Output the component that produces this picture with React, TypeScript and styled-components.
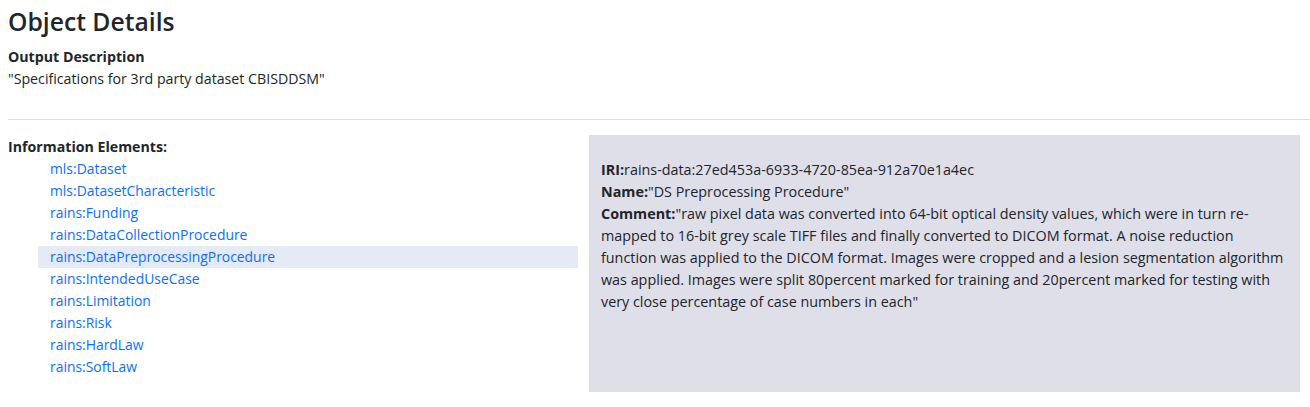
import React from 'react';
import styled, {createGlobalStyle} from 'styled-components';

const GlobalStyle = createGlobalStyle`
    body {
        margin: 0;
        background: #ffffff;
        color: #212529;
        font-family: "Open Sans", "Noto Sans", sans-serif;
        font-size: 14.2px;
        line-height: 22px;
    }
`;

const Page = styled.div`
    padding: 5px 0 0 8px;
`;

const Title = styled.h1`
    margin: 0;
    font-size: 24.7px;
    font-weight: 600;
    line-height: 34px;
    color: #212529;
`;

const Label = styled.div`
    margin-top: 7px;
    font-weight: 700;
`;

const Description = styled.div``;

const Divider = styled.hr`
    margin: 29px 0 15px 0;
    border: 0;
    border-top: 1px solid #dedede;
`;

const Columns = styled.div`
    display: grid;
    grid-template-columns: 570px 711px;
    column-gap: 11px;
    align-items: start;
`;

const ElementsTitle = styled.div`
    font-weight: 700;
    padding-top: 1px;
`;

const ElementList = styled.ul`
    list-style: none;
    margin: 0;
    padding: 0 0 0 30px;
`;

const ElementItem = styled.li<{ $active?: boolean }>`
    padding-left: 12px;
    height: 22px;
    background: ${p => p.$active ? '#e5ebf6' : 'transparent'};
`;

const ElementLink = styled.a`
    color: #0d6efd;
    font-size: 13.9px;
    text-decoration: none;
`;

const DetailPanel = styled.div`
    background: #dfdfea;
    height: 257px;
    box-sizing: border-box;
    padding: 24px 10px 0 12px;
    font-size: 14.35px;
    color: #212529;
`;

const Field = styled.div``;

const FieldName = styled.b`
    font-weight: 700;
`;

const elements = [
    'mls:Dataset',
    'mls:DatasetCharacteristic',
    'rains:Funding',
    'rains:DataCollectionProcedure',
    'rains:DataPreprocessingProcedure',
    'rains:IntendedUseCase',
    'rains:Limitation',
    'rains:Risk',
    'rains:HardLaw',
    'rains:SoftLaw',
];

const App: React.FC = () => {
    return (
        <Page>
            <GlobalStyle/>
            <Title>Object Details</Title>
            <Label>Output Description</Label>
            <Description>"Specifications for 3rd party dataset CBISDDSM"</Description>
            <Divider/>
            <Columns>
                <div>
                    <ElementsTitle>Information Elements:</ElementsTitle>
                    <ElementList>
                        {elements.map(el => (
                            <ElementItem key={el} $active={el === 'rains:DataPreprocessingProcedure'}>
                                <ElementLink href="#">{el}</ElementLink>
                            </ElementItem>
                        ))}
                    </ElementList>
                </div>
                <DetailPanel>
                    <Field><FieldName>IRI:</FieldName>rains-data:27ed453a-6933-4720-85ea-912a70e1a4ec</Field>
                    <Field><FieldName>Name:</FieldName>"DS Preprocessing Procedure"</Field>
                    <Field>
                        <FieldName>Comment:</FieldName>"raw pixel data was converted into 64-bit optical density values, which were in turn re-mapped to 16-bit grey scale TIFF files and finally converted to DICOM format. A noise reduction function was applied to the DICOM format. Images were cropped and a lesion segmentation algorithm was applied. Images were split 80percent marked for training and 20percent marked for testing with very close percentage of case numbers in each"
                    </Field>
                </DetailPanel>
            </Columns>
        </Page>
    );
};

export default App;
